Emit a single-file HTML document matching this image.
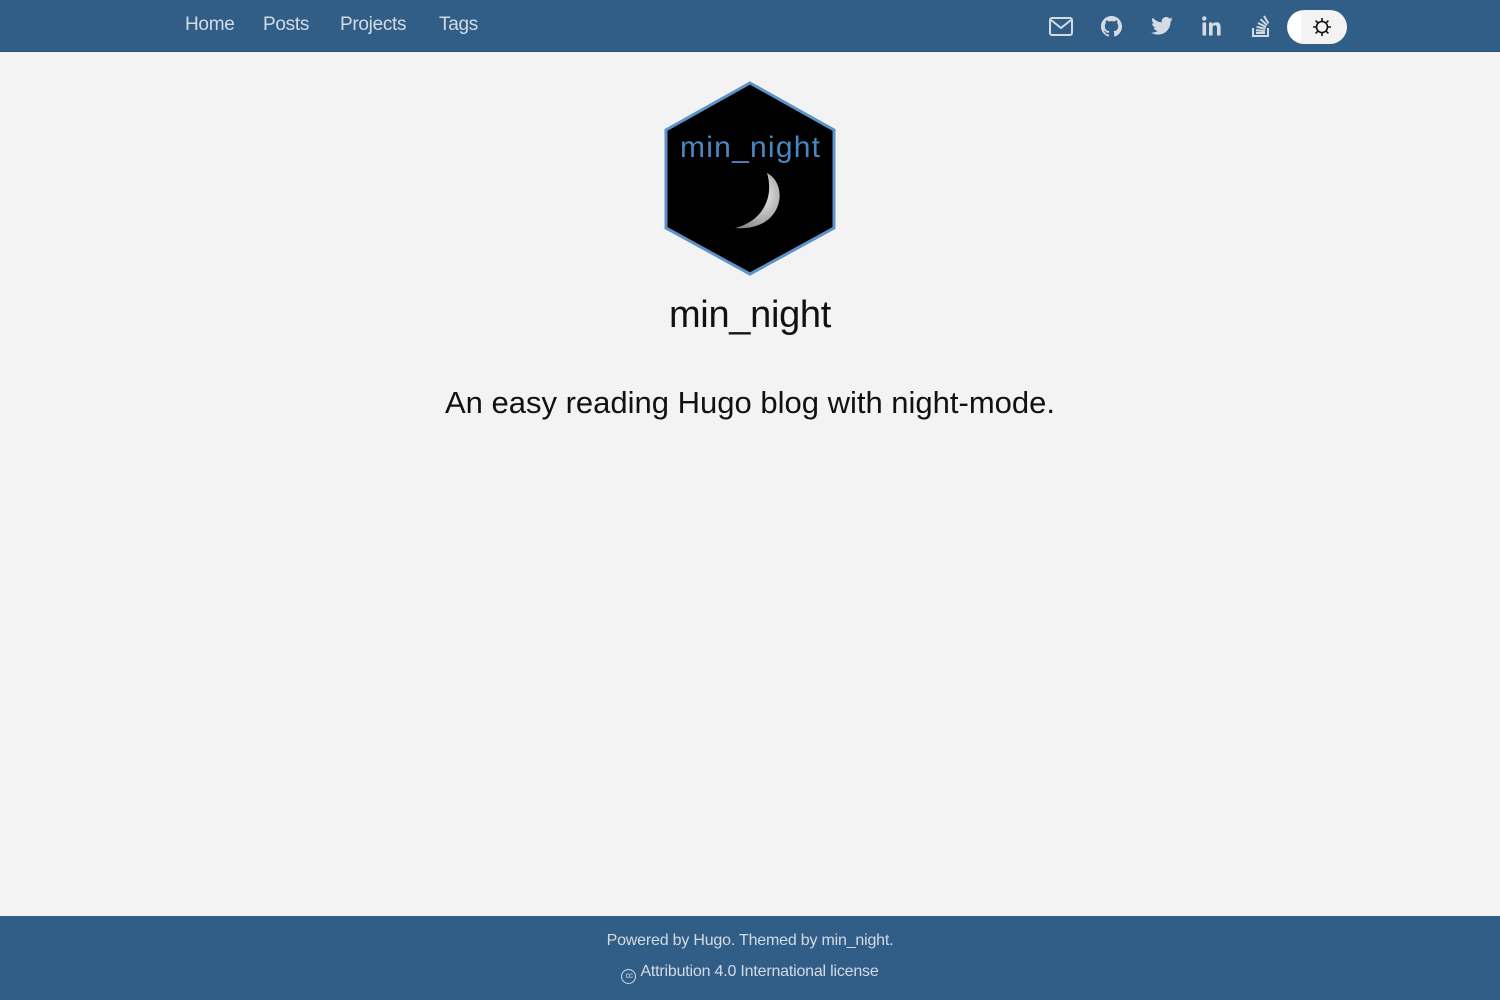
<!DOCTYPE html>
<html><head><meta charset="utf-8"><style>
*{margin:0;padding:0;box-sizing:border-box}
body{width:1500px;height:1000px;background:#f3f3f3;font-family:"Liberation Sans",sans-serif;position:relative;overflow:hidden}
.hdr{position:absolute;left:0;top:0;width:1500px;height:52px;background:#315e87;border-bottom:1px solid #2a5275}
.nav a{position:absolute;top:14px;color:#d4dbe3;font-size:19px;text-decoration:none;letter-spacing:-0.3px}
.ic{position:absolute;top:14px}
.tog{position:absolute;left:1287px;top:10px;width:60px;height:34px;border-radius:17px;background:#f3f3f3}
.tog .k{position:absolute;left:1px;top:2px;width:13px;height:30px;border-radius:15px 0 0 15px;background:#fff}
.t1{position:absolute;top:294px;left:0;width:1500px;text-align:center;font-size:38px;color:#111;letter-spacing:-0.3px}
.t2{position:absolute;top:385px;left:0;width:1500px;text-align:center;font-size:31px;color:#111;letter-spacing:0px}
.ftr{position:absolute;left:0;top:916px;width:1500px;height:84px;background:#315e87;color:#d4dbe3;text-align:center;font-size:16px;letter-spacing:-0.2px}
.cc{display:inline-block;width:15px;height:15px;border:1.5px solid #d4dbe3;border-radius:50%;font-size:8px;line-height:12px;vertical-align:-2px;letter-spacing:-0.5px;margin-right:4px}
</style></head><body>
<div class="hdr">
<div class="nav"><a style="left:185px">Home</a><a style="left:263px">Posts</a><a style="left:340px">Projects</a><a style="left:439px">Tags</a></div>
<svg class="ic" style="left:1049px;top:17px" width="24" height="19" viewBox="0 0 24 19"><rect x="1" y="1" width="22" height="17" rx="2" fill="none" stroke="#d4dbe3" stroke-width="2"/><path d="M2 3l10 8 10-8" fill="none" stroke="#d4dbe3" stroke-width="2"/></svg>
<svg class="ic" style="left:1101px;top:16px" width="21" height="21" viewBox="0 0 16 16"><path fill="#d4dbe3" d="M8 0C3.58 0 0 3.58 0 8c0 3.54 2.290 6.530 5.470 7.590.4.07.55-.17.55-.38v-1.33c-2.230.48-2.700-1.070-2.700-1.070-.36-.92-.89-1.170-.89-1.170-.73-.5.06-.49.06-.49.8.06 1.230.83 1.230.83.71 1.220 1.870.87 2.330.66.07-.52.28-.87.51-1.070-1.780-.2-3.640-.89-3.640-3.950 0-.87.31-1.590.82-2.150-.08-.2-.36-1.020.08-2.120 0 0 .67-.21 2.200.82a7.600 7.600 0 0 1 4 0c1.530-1.040 2.200-.82 2.200-.82.44 1.100.16 1.920.08 2.120.51.56.82 1.270.82 2.150 0 3.070-1.870 3.750-3.650 3.950.29.25.54.73.54 1.480v2.200c0 .21.15.46.55.38A8 8 0 0 0 16 8c0-4.420-3.580-8-8-8z"/></svg>
<svg class="ic" style="left:1151px;top:17px" width="22" height="18" viewBox="0 0 24 20"><path fill="#d4dbe3" d="M24 2.4a9.8 9.8 0 0 1-2.8.8A4.9 4.9 0 0 0 23.3.4a9.9 9.9 0 0 1-3.1 1.2A4.9 4.9 0 0 0 11.8 6 14 14 0 0 1 1.7.9a4.9 4.9 0 0 0 1.5 6.6A4.9 4.9 0 0 1 1 6.9a4.9 4.9 0 0 0 3.9 4.9 4.9 4.9 0 0 1-2.2.1 4.9 4.9 0 0 0 4.6 3.4A9.9 9.9 0 0 1 0 17.3 14 14 0 0 0 7.5 19.5c9.1 0 14-7.5 14-14v-.6A10 10 0 0 0 24 2.4z"/></svg>
<svg class="ic" style="left:1202px;top:16px" width="20" height="20" viewBox="0 0 20 20"><rect x="0.5" y="6.5" width="3.6" height="13" fill="#d4dbe3"/><circle cx="2.3" cy="2.5" r="2.2" fill="#d4dbe3"/><path fill="#d4dbe3" d="M7 6.5h3.4v1.8c.6-1.1 2-2.1 4-2.1 3.6 0 4.2 2.3 4.2 5.4v7.9h-3.6v-7c0-1.7-.1-3.3-2-3.3s-2.4 1.4-2.4 3.2v7.1H7z"/></svg>
<svg class="ic" style="left:1251px;top:14px" width="20" height="24" viewBox="0 0 20 24"><path d="M2 14v8h15v-8" fill="none" stroke="#d4dbe3" stroke-width="2"/><path d="M5 19h9M5 16.2l9 .8M5.6 12.8l8.8 2M7 9l8 4M9.5 5.2l6.5 6M13 2l4.5 7.5" stroke="#d4dbe3" stroke-width="2"/></svg>
<div class="tog"><div class="k"></div>
<svg style="position:absolute;left:25px;top:7px" width="20" height="20" viewBox="0 0 20 20"><circle cx="10" cy="10" r="5.5" fill="none" stroke="#111" stroke-width="1.6"/><g stroke="#111" stroke-width="1.6"><path d="M10 1v3M10 16v3M1 10h3M16 10h3M3.6 3.6l2.1 2.1M14.3 14.3l2.1 2.1M3.6 16.4l2.1-2.1M14.3 5.7l2.1-2.1"/></g></svg></div>
</div>
<svg style="position:absolute;left:664px;top:80px" width="172" height="198" viewBox="664 80 172 198">
<defs><radialGradient id="m" cx="0.6" cy="0.4" r="0.7"><stop offset="0" stop-color="#eee"/><stop offset="1" stop-color="#888"/></radialGradient></defs>
<polygon points="750,83 834,130 834,228 750,274 666,228 666,130" fill="#000" stroke="#5b93c9" stroke-width="3"/>
<text x="750" y="157" text-anchor="middle" font-family="Liberation Sans,sans-serif" font-size="30" fill="#4a86c2" textLength="140">min_night</text>
<path d="M767 173 C790 185 783 232 735 228 C760 222 775 200 767 173Z" fill="url(#m)"/>
</svg>
<div class="t1">min_night</div>
<div class="t2">An easy reading Hugo blog with night-mode.</div>
<div class="ftr"><div style="position:absolute;top:16px;width:100%">Powered by Hugo. Themed by min_night.</div><div style="position:absolute;top:47px;width:100%"><span class="cc">cc</span>Attribution 4.0 International license</div></div>
</body></html>
